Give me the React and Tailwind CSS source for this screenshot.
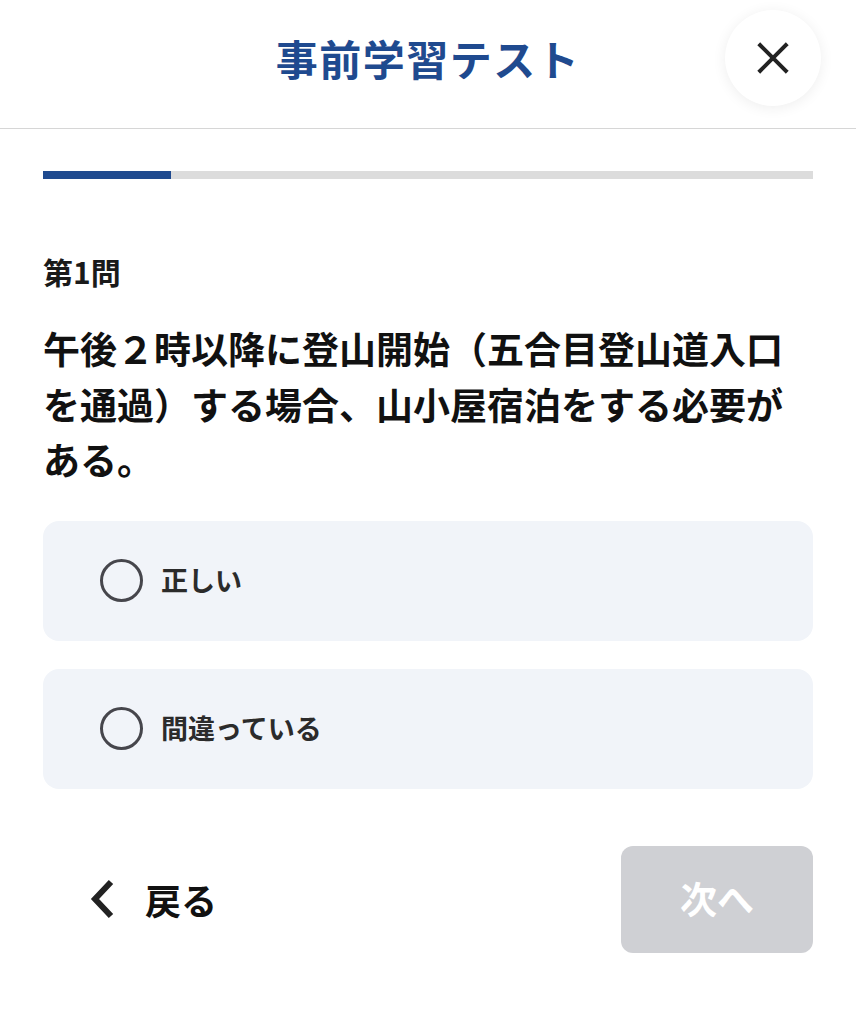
import React from 'react';

const font = { fontFamily: '"Noto Sans CJK JP", "Noto Sans", sans-serif' };

const Option = ({ label }) => (
  <button className="flex items-center w-full h-[120px] rounded-[16px] bg-[#f1f4f9] pl-[57px] text-left">
    <span className="w-[43px] h-[43px] rounded-full border-[3.5px] border-[#46464c] shrink-0" />
    <span className="ml-[18px] text-[27px] font-bold text-[#2b2b2b]">{label}</span>
  </button>
);

export default function App() {
  return (
    <div className="w-[856px] h-[1024px] bg-white" style={font}>
      {/* header */}
      <header className="relative h-[129px] border-b-[1.5px] border-[#d6d6d6] flex items-center justify-center">
        <h1 className="text-[42px] font-bold text-[#1f4a8f] tracking-[1.5px] -mt-[14px]">事前学習テスト</h1>
        <button className="absolute right-[35px] top-[10px] w-[96px] h-[96px] rounded-full bg-white shadow-[0_2px_14px_rgba(0,0,0,0.07)] flex items-center justify-center">
          <svg width="44" height="44" viewBox="0 0 24 24" fill="none" stroke="#222" strokeWidth="2.2" strokeLinecap="square">
            <path d="M5 5L19 19M19 5L5 19" />
          </svg>
        </button>
      </header>

      <main className="px-[43px]">
        {/* progress */}
        <div className="mt-[42px] h-[8px] bg-[#dcdcdc] flex">
          <div className="w-[128px] h-full bg-[#1f4a8f]" />
        </div>

        <p className="mt-[77px] text-[30px] font-bold text-[#1a1a1a] leading-none">第1問</p>

        <p className="mt-[35px] text-[37px] font-bold text-[#111] leading-[1.5]">
          午後２時以降に登山開始（五合目登山道入口を通過）する場合、山小屋宿泊をする必要がある。
        </p>

        <div className="mt-[33px] flex flex-col gap-[28px]">
          <Option label="正しい" />
          <Option label="間違っている" />
        </div>

        <div className="mt-[57px] flex items-center justify-between">
          <button className="flex items-center ml-[44px] gap-[28px] text-[36px] font-bold text-[#111]">
            <svg width="30" height="40" viewBox="0 0 30 40" fill="none" stroke="#222" strokeWidth="6">
              <path d="M24 3L8 20L24 37" />
            </svg>
            <span>戻る</span>
          </button>
          <button className="w-[192px] h-[107px] rounded-[12px] bg-[#cfd0d4] text-white text-[37px] font-bold">次へ</button>
        </div>
      </main>
    </div>
  );
}
